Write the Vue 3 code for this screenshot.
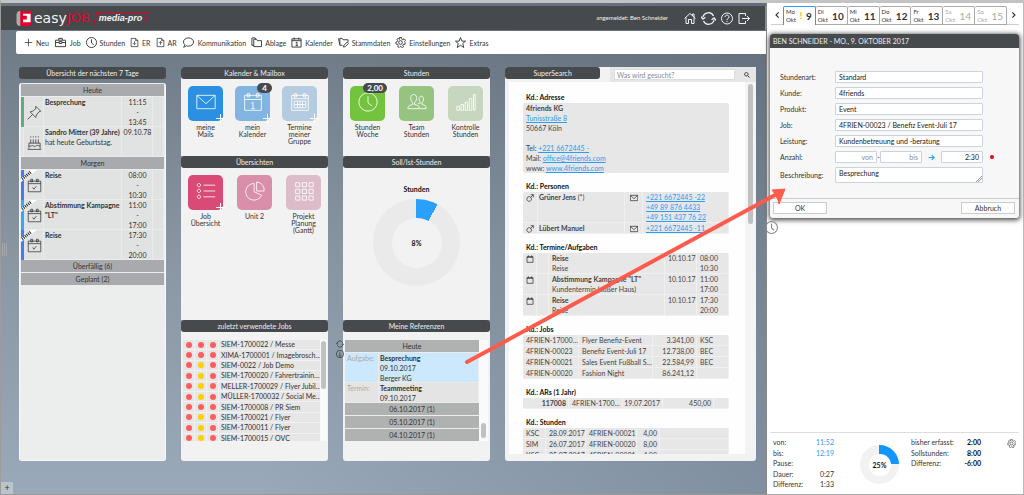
<script setup>
const icons = {
  plus: 'M12 2v20M2 12h20',
  case: 'M1 7h22v14H1zM1 12h8M15 12h8M8 7V3h8v4M9 10h6v4H9z',
  clock: 'M12 1a11 11 0 1 0 0 22a11 11 0 1 0 0-22M12 5v8l5 4',
  docIn: 'M3 1h12l6 6v16H3zM15 1v6h6M12 9v8M8 14l4 4l4-4',
  docOut: 'M3 1h12l6 6v16H3zM15 1v6h6M12 18v-8M8 13l4-4l4 4',
  bubble: 'M12 2c6 0 11 4 11 9s-5 9-11 9c-2 0-4 0-5-1c-1 2-3 3-6 3c2-1 3-3 3-5c-2-2-3-4-3-6c0-5 5-9 11-9z',
  folder: 'M6 21V5h6l2 3h9v13zM6 18H2V2h7l2 3',
  calendar: 'M2 4h20v18H2zM2 8h20M7 1v5M17 1v5M10 13l3-2v8M10 19h5',
  master: 'M10 18H4V3h5l2 3h11v5M4 17L1 3M12 22l1-4l7-7l3 3l-7 7z',
  gear: 'M10 1h4l1 4l2 1l3-2l3 3l-2 3l1 2v4l-4 0l-1 2l2 3l-3 2l-3-2h-2l-2 2l-3-2l1-3l-1-2l-4-1v-4l3-1l1-2l-2-3l3-2l3 2zM12 8a4 4 0 1 0 0 8a4 4 0 1 0 0-8',
  star: 'M12 1l3 8h8l-6 5l2 9l-7-5l-7 5l2-9l-6-5h8z',
  home: 'M1 12L12 2l11 10M4 10v12h5v-8h6v8h5V10M17 7V3h3v6',
  refresh: 'M3 10a9 9 0 0 1 17-2M21 14a9 9 0 0 1-17 2M0 9l3 4l4-3M24 15l-3-4l-4 3',
  help: 'M12 1a11 11 0 1 0 0 22a11 11 0 1 0 0-22M8 9c0-5 8-5 8 0c0 3-4 3-4 6M12 17v2',
  exit: 'M15 7V2H2v20h13v-5M8 12h15M18 7l5 5l-5 5',
  pin: 'M14 2l8 8l-3 1l-4 5l-1 4l-9-9l4-1l5-4zM9 15l-8 8',
  cake: 'M1 23h22M3 22v-9h18v9M3 17c3 3 4-1 6 0s4 2 6 0s4 2 6 0M6 13V7M10 13V7M14 13V7M18 13V7M6 4V2M10 4V2M14 4V2M18 4V2',
  date: 'M2 5h20v17H2zM2 9h20M6 2h3v4H6zM15 2h3v4h-3zM9 15l2 3l4-5',
  mail: 'M1 4h22v16H1zM1 4l11 10L23 4',
  dateOne: 'M2 4h20v18H2zM2 9h20M5 2h3v4H5zM16 2h3v4h-3zM10 14l2-2v8M10 20h4',
  dateGrid: 'M2 4h20v18H2zM2 8h20M5 2h3v4H5zM16 2h3v4h-3zM5 11h14v8H5zM5 15h14M9 11v8M12 11v8M15 11v8',
  people: 'M1 20c0-4 3-4 6-5v-2c-4-4-3-10 1-10s5 6 1 10v2c3 1 6 1 6 5zM13 14c2 0 3 0 3-1c-2-4-2-8 1-8s4 5 1 8v2c3 1 5 1 5 5h-7',
  bars: 'M1 17h3v5H1zM6 15h3v7H6zM11 12h3v10h-3zM16 8h3v14h-3zM21 3h2v19h-2z',
  list: 'M3 3a2 2 0 1 0 1 0zM3 10a2 2 0 1 0 1 0zM3 17a2 2 0 1 0 1 0zM9 5h14M9 12h14M9 19h14',
  pie: 'M11 3a10 10 0 1 0 9 14l-9-4zM14 1v11h9a10 10 0 0 0-9-11z',
  grid: 'M2 2h5v5H2zM10 2h5v5h-5zM18 2h5v5h-5zM2 10h5v5H2zM10 10h5v5h-5zM18 10h5v5h-5zM2 18h5v5H2zM10 18h5v5h-5zM18 18h5v5h-5z',
  male: 'M9 8a7 7 0 1 0 1 0zM14 10l8-8M14 2h8v8',
  info: 'M12 1a11 11 0 1 0 0 22a11 11 0 1 0 0-22M12 6v2M9 11h3v7M8 18h8',
  small: 'M3 5h18v17H3zM3 7h18M7 1v5M17 1v5',
  arrow: 'M2 12h19M13 4l8 8l-8 8',
  left: 'M16 3l-9 9l9 9',
  right: 'M8 3l9 9l-9 9',
  search: 'M9 2a7 7 0 1 0 1 0M15 15l7 7'
}
const menu = [
  ['plus', 'Neu'], ['case', 'Job'], ['clock', 'Stunden'], ['docIn', 'ER'], ['docOut', 'AR'], ['bubble', 'Kommunikation'],
  ['folder', 'Ablage'], ['calendar', 'Kalender'], ['master', 'Stammdaten'], ['gear', 'Einstellungen'], ['star', 'Extras']
]
const trips = [
  { title: 'Reise', from: '08:00', to: '10:30', tone: 'navy' },
  { title: 'Abstimmung Kampagne "LT"', from: '11:00', to: '17:00', tone: 'sky' },
  { title: 'Reise', from: '17:30', to: '20:00', tone: 'navy' }
]
const mailTiles = [
  { icon: 'mail', label: 'meine Mails', tone: 'b1', plus: true },
  { icon: 'dateOne', label: 'mein Kalender', tone: 'b2', plus: true, badge: '4' },
  { icon: 'dateGrid', label: 'Termine meiner Gruppe', tone: 'b3', plus: true }
]
const hourTiles = [
  { icon: 'clock', label: 'Stunden Woche', tone: 'g1', badge: '2,00' },
  { icon: 'people', label: 'Team Stunden', tone: 'g2' },
  { icon: 'bars', label: 'Kontrolle Stunden', tone: 'g3' }
]
const viewTiles = [
  { icon: 'list', label: 'Job Übersicht', tone: 'p1', plus: true },
  { icon: 'pie', label: 'Unit 2', tone: 'p2' },
  { icon: 'grid', label: 'Projekt Planung (Gantt)', tone: 'p3' }
]
const jobs = [
  ['r', 'SIEM-1700022 / Messe'], ['r', 'XIMA-1700001 / Imagebrosch…'], ['y', 'SIEM-0022 / Job Demo'],
  ['y', 'SIEM-1700020 / Fahrertrainin…'], ['y', 'MELLER-1700029 / Flyer Jubil…'], ['y', 'MÜLLER-1700032 / Social Me…'],
  ['r', 'SIEM-1700008 / PR Siem'], ['y', 'SIEM-1700021 / Flyer'], ['y', 'SIEM-1700011 / Flyer'], ['y', 'SIEM-1700015 / OVC']
]
const days = [['Mo', 9], ['Di', 10], ['Mi', 11], ['Do', 12], ['Fr', 13], ['Sa', 14], ['So', 15]]
const fields = [
  ['Stundenart:', 'Standard', 'art'], ['Kunde:', '4friends', 'kunde'], ['Produkt:', 'Event', 'produkt'],
  ['Job:', '4FRIEN-00023 / Benefiz Event-Juli 17', 'job'], ['Leistung:', 'Kundenbetreuung und -beratung', 'leistung']
]
const dates = [
  ['Reise', 'Reise', '08:00', '10:30'], ['Abstimmung Kampagne "LT"', 'Kundentermin (außer Haus)', '11:00', '17:00'], ['Reise', 'Reise', '17:30', '20:00']
]
const clientJobs = [
  ['4FRIEN-17000…', 'Flyer Benefiz-Event', '3.341,00', 'KSC'], ['4FRIEN-00023', 'Benefiz Event-Juli 17', '12.738,00', 'BEC'],
  ['4FRIEN-00021', 'Sales Event Fußball S…', '22.584,99', 'BEC'], ['4FRIEN-00020', 'Fashion Night', '86.241,12', '']
]
const clientHours = [
  ['KSC', '28.09.2017', '4FRIEN-00021', '4,00'], ['SIM', '26.07.2017', '4FRIEN-00020', '8,00'], ['KSC', '25.07.2017', '4FRIEN-00021', '4,00']
]
</script>

<template>
  <div class="app">
    <div class="workspace">
      <header class="brandbar">
        <div class="logo">
          <svg class="mark" viewBox="0 0 16 16"><path class="m-grey" d="M5 0H3Q0 1 0 4v8q0 3 3 4h2z" /><path class="m-red" d="M4 0h12v13q0 3-3 3H4z" /><path class="m-white" d="M7 3h8v9H7V9h4V5H7z" /></svg>
          <span class="easy">easy</span><span class="job">JOB</span>
          <span class="media">media-pro</span>
        </div>
        <div class="session">
          <span>angemeldet: Ben Schneider</span>
          <button v-for="i in ['home', 'refresh', 'help', 'exit']" :key="i" :class="i" :aria-label="i"><svg class="ic" viewBox="0 0 24 24"><path :d="icons[i]" /></svg></button>
        </div>
      </header>
      <nav class="menu">
        <button v-for="m in menu" :key="m[1]" :class="m[0]"><svg class="ic" viewBox="0 0 24 24"><path :d="icons[m[0]]" /></svg>{{ m[1] }}</button>
      </nav>

      <main class="board">
        <section class="panel week">
          <h2>Übersicht der nächsten 7 Tage</h2>
          <div class="weekbody">
            <table class="agenda">
              <colgroup><col class="c-strip"><col class="c-icon"><col><col class="c-time"><col class="c-end"></colgroup>
              <tbody>
                <tr><th colspan="5">Heute</th></tr>
                <tr>
                  <td class="green"></td><td class="pic"><svg class="ic" viewBox="0 0 24 24"><path :d="icons.pin" /></svg></td>
                  <td><b>Besprechung</b></td><td class="time">11:15<br>-<br>13:45</td><td></td>
                </tr>
                <tr>
                  <td></td><td class="pic"><svg class="ic" viewBox="0 0 24 24"><path :d="icons.cake" /></svg></td>
                  <td class="wide"><b>Sandro Mitter (39 Jahre)</b><br>hat heute Geburtstag.</td><td class="time">09.10.78</td><td></td>
                </tr>
                <tr><th colspan="5">Morgen</th></tr>
                <tr v-for="(t, n) in trips" :key="n">
                  <td :class="t.tone"></td>
                  <td class="pic"><svg class="ic" viewBox="0 0 24 24"><path :d="icons.date" /></svg><svg class="new" viewBox="0 0 16 12"><path class="n1" d="M0 12V8L10 0h6z" /><path class="n2" d="M1 9l9-7" /></svg></td>
                  <td><b>{{ t.title }}</b></td><td class="time">{{ t.from }}<br>-<br>{{ t.to }}</td><td></td>
                </tr>
                <tr><th colspan="5">Überfällig (6)</th></tr>
                <tr><th colspan="5">Geplant (2)</th></tr>
              </tbody>
            </table>
          </div>
        </section>

        <div class="stack">
          <section class="panel short">
            <h2>Kalender &amp; Mailbox</h2>
            <div class="tiles close">
              <button v-for="t in mailTiles" :key="t.label" class="tile">
                <span class="face" :class="t.tone"><svg class="ic" viewBox="0 0 24 24"><path :d="icons[t.icon]" /></svg><i v-if="t.plus" class="add"></i><em v-if="t.badge">{{ t.badge }}</em></span>
                <span class="cap">{{ t.label }}</span>
              </button>
            </div>
          </section>
          <section class="panel tall">
            <h2>Übersichten</h2>
            <div class="tiles">
              <button v-for="t in viewTiles" :key="t.label" class="tile">
                <span class="face" :class="t.tone"><svg class="ic" viewBox="0 0 24 24"><path :d="icons[t.icon]" /></svg><i v-if="t.plus" class="add"></i></span>
                <span class="cap">{{ t.label }}</span>
              </button>
            </div>
          </section>
          <section class="panel last">
            <h2>zuletzt verwendete Jobs</h2>
            <div class="scroller joblist">
              <div class="clip">
                <table class="jobs">
                  <tbody>
                    <tr v-for="j in jobs" :key="j[1]">
                      <td class="dot"><i></i></td><td class="dot"><i :class="j[0]"></i></td><td class="dot"><i></i></td><td class="name">{{ j[1] }}</td>
                    </tr>
                  </tbody>
                </table>
              </div>
              <div class="rail"><i class="thumb"></i></div>
            </div>
          </section>
        </div>

        <div class="stack">
          <section class="panel short">
            <h2>Stunden</h2>
            <div class="tiles">
              <button v-for="t in hourTiles" :key="t.label" class="tile">
                <span class="face" :class="t.tone"><svg class="ic" viewBox="0 0 24 24"><path :d="icons[t.icon]" /></svg><em v-if="t.badge">{{ t.badge }}</em></span>
                <span class="cap">{{ t.label }}</span>
              </button>
            </div>
          </section>
          <section class="panel tall">
            <h2>Soll/Ist-Stunden</h2>
            <div class="chart">
              <b>Stunden</b>
              <div class="donut big"><span>8%</span></div>
            </div>
          </section>
          <section class="panel last refs">
            <h2>Meine Referenzen</h2>
            <div class="tools">
              <svg class="ic" viewBox="0 0 24 24"><path :d="icons.refresh" /></svg>
              <svg class="ic" viewBox="0 0 24 24"><path :d="icons.info" /></svg>
            </div>
            <div class="scroller">
              <div class="clip">
                <table class="agenda reftable">
                  <colgroup><col class="c-kind"><col></colgroup>
                  <tbody>
                    <tr><th colspan="2">Heute</th></tr>
                    <tr class="sel"><td class="kind">Aufgabe:</td><td><b>Besprechung</b><br>09.10.2017<br>Berger KG</td></tr>
                    <tr><td class="kind">Termin:</td><td><b>Teammeeting</b><br>09.10.2017</td></tr>
                    <tr><th colspan="2">06.10.2017 (1)</th></tr>
                    <tr><th colspan="2">05.10.2017 (1)</th></tr>
                    <tr><th colspan="2">04.10.2017 (1)</th></tr>
                  </tbody>
                </table>
              </div>
              <div class="rail low"><i class="thumb"></i></div>
            </div>
          </section>
        </div>

        <section class="panel super">
          <div class="superhead">
            <h2>SuperSearch</h2>
            <div class="search">
              <input type="text" aria-label="Suche" placeholder="Was wird gesucht?">
              <button aria-label="Suchen"><svg class="ic" viewBox="0 0 24 24"><path :d="icons.search" /></svg></button>
            </div>
          </div>
          <div class="results">
            <div class="found">
              <h3>Kd.: Adresse</h3>
              <address><b>4friends KG</b><br><a href="#">Tunisstraße 8</a><br>50667 Köln<br><br>Tel: <a href="#">+221 6672445 -</a><br>Mail: <a href="#">office@4friends.com</a><br>www: <a href="#">www.4friends.com</a></address>
              <h3>Kd.: Personen</h3>
              <table class="data">
                <colgroup><col class="w15"><col><col class="w18"><col class="w86"></colgroup>
                <tbody>
                  <tr><td><svg class="ic" viewBox="0 0 24 24"><path :d="icons.male" /></svg></td><td class="strong"><b>Grüner Jens</b> (*)</td><td class="env"><svg class="ic" viewBox="0 0 24 24"><path :d="icons.mail" /></svg></td><td><a href="#">+221 6672445 -22</a><br><a href="#">+49 89 876 4433</a><br><a href="#">+49 151 437 76 22</a></td></tr>
                  <tr><td><svg class="ic" viewBox="0 0 24 24"><path :d="icons.male" /></svg></td><td class="strong"><b>Lübert Manuel</b></td><td class="env"><svg class="ic" viewBox="0 0 24 24"><path :d="icons.mail" /></svg></td><td><a href="#">+221 6672445 -11</a></td></tr>
                </tbody>
              </table>
              <h3>Kd.: Termine/Aufgaben</h3>
              <table class="data">
                <colgroup><col class="w14"><col class="w12"><col><col class="w33"><col class="w33"></colgroup>
                <tbody>
                  <tr v-for="(d, n) in dates" :key="n"><td><svg class="ic" viewBox="0 0 24 24"><path :d="icons.small" /></svg></td><td></td><td><b>{{ d[0] }}</b><br>{{ d[1] }}</td><td>10.10.17</td><td>{{ d[2] }}<br>{{ d[3] }}</td></tr>
                </tbody>
              </table>
              <h3>Kd.: Jobs</h3>
              <table class="data">
                <colgroup><col class="w56"><col><col class="w44"><col class="w33"></colgroup>
                <tbody><tr v-for="j in clientJobs" :key="j[0]"><td>{{ j[0] }}</td><td>{{ j[1] }}</td><td class="num">{{ j[2] }}</td><td>{{ j[3] }}</td></tr></tbody>
              </table>
              <h3>Kd.: ARs (1 Jahr)</h3>
              <table class="data">
                <colgroup><col class="w46"><col><col class="w42"><col class="w50"><col class="w15"></colgroup>
                <tbody><tr><td class="num"><b>117008</b></td><td>4FRIEN-1700…</td><td class="num">19.07.2017</td><td class="num">450,00</td><td></td></tr></tbody>
              </table>
              <h3>Kd.: Stunden</h3>
              <table class="data">
                <colgroup><col class="w22"><col class="w42"><col class="w50"><col class="w22"><col></colgroup>
                <tbody><tr v-for="h in clientHours" :key="h[1]"><td>{{ h[0] }}</td><td>{{ h[1] }}</td><td>{{ h[2] }}</td><td class="num">{{ h[3] }}</td><td></td></tr></tbody>
              </table>
            </div>
            <div class="rail main"><i class="thumb"></i></div>
          </div>
        </section>
      </main>
      <div class="grip"></div>
      <button class="corner" aria-label="Hinzufügen">+</button>
    </div>

    <aside class="side">
      <nav class="days">
        <button class="nav" aria-label="Zurück"><svg class="ic" viewBox="0 0 24 24"><path :d="icons.left" /></svg></button>
        <button v-for="(d, n) in days" :key="d[0]" class="day" :class="{ on: n === 0, off: n > 4 }">
          <span>{{ d[0] }}<br>Okt</span><i v-if="n === 0">!</i><b>{{ d[1] }}</b>
        </button>
        <button class="nav" aria-label="Weiter"><svg class="ic" viewBox="0 0 24 24"><path :d="icons.right" /></svg></button>
      </nav>
      <form class="dialog" @submit.prevent>
        <h2>BEN SCHNEIDER - MO., 9. OKTOBER 2017</h2>
        <div class="fields">
          <template v-for="f in fields" :key="f[2]">
            <label :for="f[2]">{{ f[0] }}</label><input :id="f[2]" type="text" :value="f[1]">
          </template>
          <label for="von">Anzahl:</label>
          <div class="amount">
            <input id="von" type="text" placeholder="von"><span>-</span><input type="text" aria-label="bis" placeholder="bis">
            <svg class="ic" viewBox="0 0 24 24"><path :d="icons.arrow" /></svg>
            <input type="text" aria-label="Dauer" value="2:30"><i class="req"></i>
          </div>
          <label for="text">Beschreibung:</label><textarea id="text">Besprechung</textarea>
        </div>
        <footer><button type="submit">OK</button><button type="button">Abbruch</button></footer>
      </form>
      <div class="history"><svg class="ic" viewBox="0 0 24 24"><path :d="icons.clock" /></svg></div>
      <div class="summary">
        <dl class="blue">
          <div><dt>von:</dt><dd>11:52</dd></div><div><dt>bis:</dt><dd>12:19</dd></div><div><dt>Pause:</dt><dd></dd></div>
          <div class="plain"><dt>Dauer:</dt><dd>0:27</dd></div><div class="plain"><dt>Differenz:</dt><dd>1:33</dd></div>
        </dl>
        <div class="donut small"><span>25%</span></div>
        <dl class="totals">
          <div><dt>bisher erfasst:</dt><dd>2:00</dd></div><div><dt>Sollstunden:</dt><dd>8:00</dd></div><div><dt>Differenz:</dt><dd>-6:00</dd></div>
        </dl>
        <button class="cog" aria-label="Einstellungen"><svg class="ic" viewBox="0 0 24 24"><path :d="icons.gear" /></svg></button>
      </div>
    </aside>

    <svg class="pointer" viewBox="0 0 320 176"><path class="shaft" d="M1 174L309 7" /><path class="tip" d="M319 1l-13 1l3 4l3 6l1 4z" /></svg>
  </div>
</template>

<style>
body { margin: 0; }
</style>

<style scoped>
* { box-sizing: border-box; }
.app { position: relative; display: grid; grid-template-columns: minmax(0, 1fr) 258px; min-height: 100vh; border-top: 3px solid #c3c3c3; border-left: 1px solid #9c9c9c; font-family: Lato, "Liberation Sans", sans-serif; font-size: 7px; line-height: 10px; color: #333; background: #fff; }
h2, h3, dl, dd { margin: 0; }
button { font: inherit; color: inherit; background: none; border: 0; padding: 0; line-height: inherit; }
input, textarea { font: inherit; color: #222; margin: 0; min-width: 0; }
input::placeholder { color: #8b8b8b; opacity: 1; }
a { color: #2d9cf0; text-decoration: underline; }
.ic { display: block; fill: none; stroke: currentColor; stroke-width: 2; }
.workspace { position: relative; display: flex; flex-direction: column; padding-top: 3px; background: linear-gradient(100deg, #46546800 40%, #465468 240%), linear-gradient(#6a7582, #8996a2 50%, #9aa9b9); border-bottom: 1px solid #999; }
.brandbar { display: flex; align-items: center; justify-content: space-between; height: 24px; padding: 0 15px 0 15px; background: #474a4d; border-right: 1px solid #8a8f96; }
.logo { display: flex; align-items: center; color: #f4f4f4; }
.mark { width: 16px; height: 15px; margin-right: 2px; }
.m-grey { fill: #aaa; }
.m-red { fill: #e4002b; }
.m-white { fill: #fff; }
.easy { font: 14px/14px "DejaVu Sans", sans-serif; }
.job { font: 13px/14px "DejaVu Sans", sans-serif; color: #e4002b; }
.media { position: relative; margin-left: 6px; padding: 0 3px; font: italic bold 9px/10px "Liberation Sans", sans-serif; }
.media::before { content: ""; position: absolute; inset: -1px -1px -2px; border: solid #e4002b; border-width: 1px 1px 0; transform: skewX(-15deg); }
.session { display: flex; align-items: center; gap: 5px; color: #f2f2f2; }
.session span { margin-right: 11px; font-size: 6px; }
.session .ic { width: 12px; height: 13px; stroke-width: 2; }
.session .refresh .ic { width: 15px; height: 15px; }
.menu { display: flex; align-items: center; gap: 5px; height: 23px; margin: 1px 0 0 15px; padding-left: 8px; background: #fff; border-radius: 2px 0 0 2px; }
.menu button { display: flex; align-items: center; gap: 3px; }
.menu .ic { width: 11px; height: 11px; }
.menu .plus .ic, .menu .docIn .ic, .menu .docOut .ic { width: 9px; }
.menu .case .ic, .menu .bubble .ic { width: 13px; }
.board { flex: 1; display: grid; grid-template-columns: 147fr 147fr 147fr 251fr; gap: 15px; padding: 13px 10px 33px 18px; }
.panel { display: flex; flex-direction: column; min-width: 0; background: #f2f2f2; border-radius: 3px; }
.panel h2, .dialog h2 { height: 12px; border-radius: 3px; background: #474a4d; color: #ededed; font-size: 7px; font-weight: 400; line-height: 12px; text-align: center; }
.week { background: none; }
.weekbody { flex: 1; margin-top: 4px; padding: 1px; background: #eceded; border: 1px solid #f8f8f8; border-top-width: 0; border-radius: 3px; }
.agenda { width: 100%; table-layout: fixed; border-collapse: separate; border-spacing: 0; }
.agenda th { height: 13px; padding: 0; background: #a9aaad; border-bottom: 1px solid #ececec; font-weight: 400; line-height: 12px; }
.agenda td { position: relative; padding: 0 1px; background: #e1e2e2; vertical-align: top; height: 30px; box-shadow: inset -1px -1px #ebebeb; }
.agenda td.wide { white-space: nowrap; }
.c-strip { width: 3px; }
.c-icon { width: 20px; }
.c-time { width: 31px; }
.c-end { width: 11px; }
.agenda td.green { background: #68a883; box-shadow: none; }
.agenda td.navy { background: #4a78ee; box-shadow: none; }
.agenda td.sky { background: #38a5f5; box-shadow: none; }
.time { text-align: center; }
.agenda .pic { vertical-align: middle; }
.pic .ic { width: 15px; height: 15px; margin: 0 auto; stroke-width: 1; stroke: #111; }
.new { position: absolute; left: -3px; top: 0; width: 16px; height: 12px; }
.n1 { fill: #fff; }
.n2 { stroke: #222; stroke-width: 3; stroke-dasharray: 1 1; }
.stack { display: grid; grid-template-rows: 89px 164px 1fr; }
.short, .tall { border-radius: 3px 3px 0 0; }
.tiles { display: flex; gap: 14px; padding: 7px 7px 0; }
.tiles.close { gap: 12px; }
.tile { display: flex; flex-direction: column; align-items: center; width: 35px; line-height: 7px; }
.face { position: relative; display: flex; justify-content: center; width: 35px; height: 35px; padding-top: 6px; border-radius: 5px; color: #fff; }
.face .ic { width: 20px; height: 20px; stroke-width: 1; }
.face em { position: absolute; top: -3px; right: -2px; min-width: 15px; padding: 0 4px; border-radius: 5px; background: #474a4d; font-style: normal; font-weight: 700; font-size: 8px; line-height: 10px; text-align: center; }
.add { position: absolute; right: -2px; bottom: -2px; width: 9px; height: 9px; background: linear-gradient(#fff, #fff) center / 9px 1px no-repeat, linear-gradient(#fff, #fff) center / 1px 9px no-repeat; }
.cap { margin-top: 3px; }
.b1 { background: #2c90e2; }
.b2 { background: #82b5e2; }
.b3 { background: #b5cbdf; }
.g1 { background: #74c33e; }
.g2 { background: #96c380; }
.g3 { background: #c6d6bf; }
.p1 { background: #da4a76; }
.p2 { background: #d98fa9; }
.p3 { background: #dcbcc8; }
.scroller { display: flex; margin: 8px 2px 0; }
.joblist { margin-right: 1px; }
.joblist .rail { width: 7px; }
.joblist .thumb { margin-left: 1px; }
.clip { flex: 1; min-width: 0; height: 101px; overflow: hidden; }
.rail { width: 9px; background: #fafafa; }
.thumb { display: block; width: 5px; height: 48px; margin: 1px auto 0 2px; border-radius: 3px; background: #c1c1c1; }
.rail.low .thumb { height: 15px; margin-top: 83px; }
.jobs { width: 100%; height: 104px; table-layout: fixed; border-collapse: separate; border-spacing: 0; }
.jobs td { padding: 0; line-height: 9px; background: #e6e6e6; border: solid #f1f1f1; border-width: 0 1px 1px 0; }
.jobs .dot { width: 12px; }
.dot i { display: block; width: 6px; height: 6px; margin: 0 auto; border-radius: 50%; background: #ff5e5e; }
.dot i.y { background: #ffd000; }
.jobs .name { padding-left: 2px; border-right: 0; white-space: nowrap; }
.chart { display: flex; flex-direction: column; align-items: center; gap: 5px; padding-top: 16px; color: #111; }
.donut { display: grid; place-items: center; border-radius: 50%; font-weight: 700; color: #111; }
.donut span { display: grid; place-items: center; border-radius: 50%; }
.big { width: 87px; height: 87px; background: conic-gradient(#2a9ffc 8%, #eaeaea 0); }
.big span { width: 50px; height: 50px; background: #f2f2f2; }
.refs { position: relative; }
.tools { position: absolute; left: -7px; top: 20px; display: grid; gap: 2px; }
.tools .ic { width: 8px; height: 8px; }
.reftable th { background: #b0b1b1; }
.reftable td { height: auto; background: #e4e4e4; }
.reftable .sel td { background: #cce8fd; }
.c-kind { width: 34px; }
.agenda .kind { padding-left: 2px; color: #aaa; }
.superhead { display: flex; justify-content: space-between; height: 15px; }
.superhead h2 { width: 38%; }
.search { display: flex; align-items: center; gap: 9px; width: 146px; padding: 0 6px 0 4px; background: #e6e6e6; }
.search input { flex: 1; height: 11px; padding: 0 2px; border: 1px solid #ddd; background: #fff; }
.search .ic { width: 6px; height: 6px; stroke-width: 4; }
.results { flex: 1 0 0; display: flex; min-height: 0; margin: 0 0 7px 4px; background: #fefefe; overflow: hidden; }
.found { flex: 1; height: 372px; padding: 9px 16px 0 14px; overflow: hidden; color: #444; }
.main { width: 11px; background: #f4f4f4; }
.main .thumb { height: 140px; margin-top: 2px; margin-left: 3px; }
h3 { padding-left: 3px; font-size: 7px; line-height: 12px; color: #111; }
address, .data { margin-bottom: 7px; border-radius: 2px; background: #e7e7e7; overflow: hidden; }
address { padding: 0 3px; font-style: normal; }
.data { width: 100%; table-layout: fixed; border-collapse: separate; border-spacing: 0; }
.data td { padding: 0 2px 0 3px; white-space: nowrap; vertical-align: top; border: solid #f0f0f0; border-width: 0 1px 1px 0; }
.data td.strong { padding-left: 1px; }
.data td.env { padding-left: 5px; }
.data .ic { width: 8px; height: 8px; margin-top: 2px; color: #222; stroke-width: 2; }
.data .num { text-align: right; padding-left: 0; }
.w12 { width: 12px; } .w14 { width: 14px; } .w15 { width: 15px; } .w18 { width: 18px; } .w22 { width: 23px; }
.w33 { width: 32px; } .w42 { width: 40px; } .w44 { width: 44px; } .w46 { width: 46px; } .w50 { width: 51px; } .w56 { width: 56px; } .w86 { width: 86px; }
.grip { position: absolute; left: 1px; top: 240px; width: 5px; height: 13px; background: repeating-linear-gradient(90deg, #a4a8ac 0 1px, transparent 1px 2px); }
.corner { position: absolute; left: 0; bottom: 0; width: 12px; height: 12px; background: #b9c4cf; font-size: 9px; line-height: 12px; text-align: center; }
.side { position: relative; display: flex; flex-direction: column; min-width: 0; padding: 3px 4px 0 3px; background: #fff; border-left: 1px solid #888; border-right: 1px solid #bbb; border-bottom: 1px solid #aaa; }
.days { display: flex; height: 19px; margin: 0 0 0 1px; }
.nav { width: 12px; border-bottom: 1px solid #ccc; }
.nav .ic { width: 7px; height: 8px; margin: 0 auto; stroke-width: 4; }
.day { flex: 1; display: flex; align-items: center; justify-content: space-between; padding: 0 3px 0 2px; border: solid #aaa; border-width: 1px 1px 1px 0; border-radius: 2px 2px 0 0; line-height: 8px; text-align: left; }
.day span { font-size: 6px; }
.day b { font-size: 10px; }
.day i { color: #ffb000; font-style: normal; font-weight: 700; font-size: 9px; }
.day.on { border: 1px solid #2d9cf0; border-bottom: 0; }
.day.off { color: #aaa; }
.day.off b { font-weight: 400; }
.dialog { margin-top: 9px; background: #f7f7f7; border-radius: 3px; box-shadow: 0 1px 5px 1px #444; }
.dialog h2 { height: 14px; padding-left: 3px; border-radius: 3px 3px 0 0; line-height: 14px; text-align: left; }
.fields { display: grid; grid-template-columns: 55px 1fr; gap: 4px 0; align-items: center; padding: 23px 36px 15px 10px; }
.fields input, .fields textarea { height: 12px; padding: 0 3px; border: 1px solid #ccd3dc; border-radius: 1px; background: #fff; line-height: 10px; }
.fields textarea { width: 100%; height: 16px; display: block; resize: none; background: linear-gradient(135deg, transparent 50%, #999 50% 58%, transparent 58% 70%, #999 70% 78%, transparent 78%) right bottom / 7px 7px no-repeat #fff; }
.amount { display: flex; align-items: center; margin-right: -11px; }
.amount input { width: 42px; text-align: right; }
.amount span { width: 3px; text-align: center; }
.amount .ic { width: 7px; height: 7px; margin: 0 auto; color: #2d9cf0; stroke-width: 4; }
.req { width: 4px; height: 4px; margin-left: 7px; border-radius: 50%; background: #dd0020; }
.dialog footer { display: flex; justify-content: space-between; padding: 3px 4px 4px 3px; border-top: 1px solid #ccc; }
.dialog footer button { width: 54px; height: 12px; border: 1px solid #ccc; background: #fff; }
.history { margin: 3px 0 0 -5px; color: #888; }
.history .ic { width: 13px; height: 13px; }
.summary { display: flex; align-items: flex-start; margin-top: auto; padding: 4px 3px 5px 3px; border-top: 1px solid #ddd; }
dl { display: flex; flex-direction: column; justify-content: space-between; height: 52px; width: 61px; }
dl div { display: flex; justify-content: space-between; }
dl.totals { height: 31px; width: 70px; }
.blue dd { color: #2d9cf0; }
.blue .plain dd { color: #333; }
.totals dd { font-weight: 700; color: #111; }
.small { width: 39px; height: 39px; margin: 8px 12px 0 26px; background: conic-gradient(#1296fb 25%, #f2f2f2 0); }
.small span { width: 22px; height: 22px; background: #fff; }
.cog { margin: 2px 0 0 auto; color: #555; }
.cog .ic { width: 9px; height: 9px; }
.pointer { position: absolute; left: 465px; top: 185px; width: 320px; height: 176px; pointer-events: none; overflow: visible; }
.shaft { fill: none; stroke: #ff5b4c; stroke-width: 4; stroke-linecap: round; }
.tip { fill: #ff5b4c; stroke: #ff5b4c; }
</style>
